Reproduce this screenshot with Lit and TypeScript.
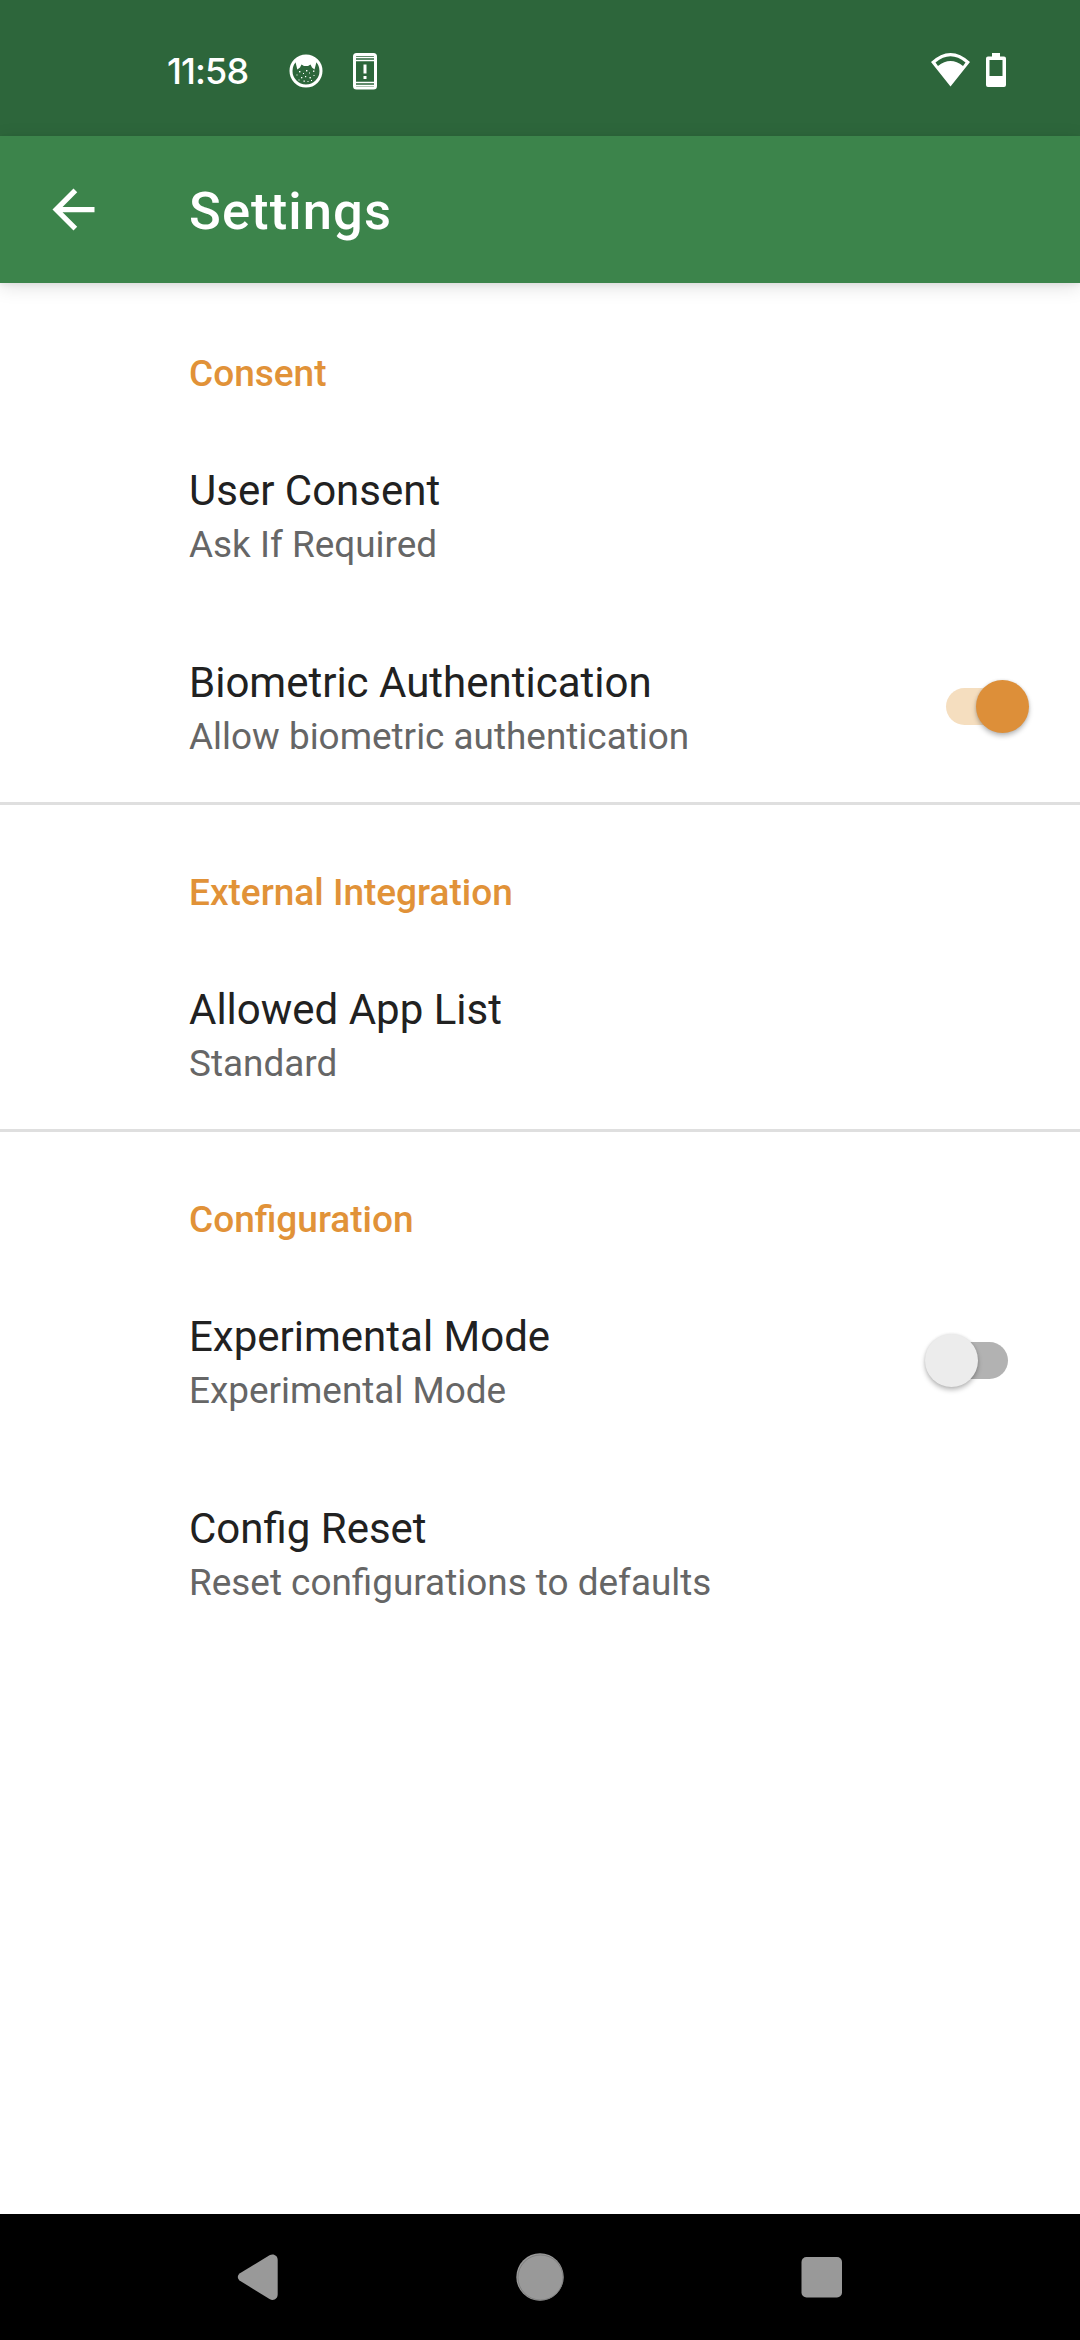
import { LitElement, html, css, svg, nothing } from "lit";
import { customElement, property } from "lit/decorators.js";

interface Item { title: string; summary: string; checked?: boolean }
interface Section { name: string; items: Item[] }

const SECTIONS: Section[] = [
  { name: "Consent", items: [
    { title: "User Consent", summary: "Ask If Required" },
    { title: "Biometric Authentication", summary: "Allow biometric authentication", checked: true },
  ] },
  { name: "External Integration", items: [
    { title: "Allowed App List", summary: "Standard" },
  ] },
  { name: "Configuration", items: [
    { title: "Experimental Mode", summary: "Experimental Mode", checked: false },
    { title: "Config Reset", summary: "Reset configurations to defaults" },
  ] },
];

// Light flecks scattered inside the cat notification icon: x, y, size.
const FLECKS = [
  [10, 17, 1.4], [14, 19, 1], [17, 16, 1.4], [20, 18.5, 1], [24, 16.5, 1.4], [7.5, 20.5, 1],
  [12, 23, 1.3], [16, 22, 1.2], [20.5, 23, 1.4], [24.5, 21, 1], [14.5, 26.5, 1.3], [18.5, 27, 1], [9.5, 25.5, 1], [22, 26, 1],
];

@customElement("status-bar")
class StatusBar extends LitElement {
  static styles = css`
    :host { display: flex; align-items: center; justify-content: space-between; height: 136px; box-sizing: border-box;
      padding: 5px 73px 0 167px; background: #2d663b; color: #fff; }
    .group { display: flex; align-items: center; }
    .group.system { padding-bottom: 1px; }
    .time { font: 500 36px/42px Inter, sans-serif; letter-spacing: -0.9px; width: 122px; white-space: nowrap; }
    svg { display: block; }
    .warn { margin-left: 29.500px; }
    .battery { margin-left: 15px; }
  `;
  render() {
    return html`
      <div class="group">
        <span class="time">11:58</span>
        <svg width="34" height="34" viewBox="0 0 34 34">
          <circle cx="17" cy="17" r="15" fill="none" stroke="#fff" stroke-width="3" />
          <path d="M6 6Q17-1 28 6L25.500 15.500 23 13.500 21.500 10.500 19 12H15L12.500 10.500 11 13.500 8.300 15.500Z" fill="#fff" />
          ${FLECKS.map(([x, y, s]) => svg`<rect x=${x} y=${y} width=${s} height=${s} fill="#fff"/>`)}
        </svg>
        <svg class="warn" width="25" height="38" viewBox="0 0 25 38">
          <rect x="1.500" y="2.500" width="21" height="33.500" rx="2" fill="none" stroke="#fff" stroke-width="3" />
          <path d="M2 5.500H22M2 8.500H22M2 30.500H22M2 33.500H22" stroke="#fff" stroke-width="1.400" />
          <path d="M10.500 12.500H13.500V21.500H10.500ZM10.500 24H13.500V27H10.500Z" fill="#fff" />
        </svg>
      </div>
      <div class="group system">
        <svg width="39" height="34" viewBox="0 0 39 34">
          <path fill="#fff" fill-rule="evenodd" d="M0 9Q19.500-9 39 9L19.500 33.500ZM4.500 9.500 7 13Q19.500 3 32 13L34.500 9.500Q19.500-3 4.500 9.500Z" />
        </svg>
        <svg class="battery" width="22" height="34" viewBox="0 0 22 34">
          <path fill="#fff" fill-rule="evenodd" d="M7 0H15V3.500H19Q21 3.500 21 5.500V32Q21 34 19 34H3Q1 34 1 32V5.500Q1 3.500 3 3.500H7ZM4.500 7V23H17.500V7Z" />
        </svg>
      </div>`;
  }
}

@customElement("tool-bar")
class ToolBar extends LitElement {
  static styles = css`
    :host { display: flex; align-items: center; height: 147px; box-sizing: border-box; padding-left: 42px; gap: 84px;
      background: #3c844b; color: #fff; box-shadow: 0 4px 18px rgba(0,0,0,.12), 0 2px 5px rgba(0,0,0,.06); z-index: 1; }
    .title { margin: 3px 0 0; font: 500 52.5px/62px Roboto, sans-serif; letter-spacing: 1.1px; }
    svg { display: block; }
  `;
  render() {
    return html`
      <svg width="63" height="63" viewBox="0 0 24 24"><path fill="#fff" d="M20 11H7.830l5.590-5.590L12 4l-8 8 8 8 1.410-1.410L7.830 13H20v-2z" /></svg>
      <h1 class="title">Settings</h1>`;
  }
}

@customElement("toggle-switch")
class ToggleSwitch extends LitElement {
  @property({ type: Boolean }) on = false;
  static styles = css`
    :host { display: block; }
    .track { display: flex; align-items: center; width: 62px; height: 37px; border-radius: 19px; background: #b2b2b2; }
    .thumb { flex: none; width: 53px; height: 53px; border-radius: 50%; background: #ececec; margin-left: -21px;
      box-shadow: 0 3px 5px rgba(0,0,0,.26), 0 0 3px rgba(0,0,0,.1); }
    .track.on { background: #f5debf; justify-content: flex-end; }
    .on .thumb { background: #dd8f39; margin: 0 -21px 0 0; }
  `;
  render() {
    return html`<div class="track ${this.on ? "on" : ""}"><div class="thumb"></div></div>`;
  }
}

@customElement("nav-bar")
class NavBar extends LitElement {
  static styles = css`
    :host { display: flex; align-items: center; justify-content: space-between; height: 126px; box-sizing: border-box;
      padding: 0 237px; background: #000; }
    svg { display: block; }
  `;
  render() {
    return html`
      <svg width="42" height="48" viewBox="0 0 42 48"><path fill="#999" d="M2.500 20.500 32.500 2.200C36.500 0 40.700 2.500 40.700 7V41C40.700 46 36.500 48.300 32.500 46L2.500 27.500Q-1 24 2.500 20.500Z" /></svg>
      <svg width="48" height="48" viewBox="0 0 48 48"><circle cx="24" cy="24" r="23.700" fill="#999" /><circle cx="24.500" cy="24.500" r="22.500" fill="none" stroke="#777" stroke-width=".7" /></svg>
      <svg width="42" height="42" viewBox="0 0 42 42"><rect x=".5" y="1" width="40.500" height="40.500" rx="5" fill="#999" /></svg>`;
  }
}

@customElement("app-root")
class AppRoot extends LitElement {
  static styles = css`
    :host { display: flex; flex-direction: column; height: 2340px; background: #fff; font-family: Roboto, sans-serif; }
    .list { flex: 1; }
    .section + .section { box-shadow: inset 0 3px #dfdfdf; }
    .category { margin: 0; height: 135px; box-sizing: border-box; padding: 66px 0 0 189px; font-weight: 500;
      font-size: 37px; line-height: 50px; color: #e19238; }
    .row { display: flex; justify-content: space-between; height: 192px; box-sizing: border-box; padding: 42px 72px 0 189px; }
    .name { padding-top: 3px; font-size: 42px; line-height: 56px; color: #212121; }
    .summary { padding-top: 1px; font-size: 36.9px; line-height: 50px; color: #666; }
    .switch { margin-top: 36px; }
  `;
  render() {
    return html`
      <status-bar></status-bar>
      <tool-bar></tool-bar>
      <main class="list">
        ${SECTIONS.map((s) => html`<section class="section">
          <h2 class="category">${s.name}</h2>
          ${s.items.map((i) => html`<div class="row">
            <div><div class="name">${i.title}</div><div class="summary">${i.summary}</div></div>
            ${i.checked === undefined ? nothing : html`<toggle-switch class="switch" ?on=${i.checked}></toggle-switch>`}
          </div>`)}
        </section>`)}
      </main>
      <nav-bar></nav-bar>`;
  }
}
